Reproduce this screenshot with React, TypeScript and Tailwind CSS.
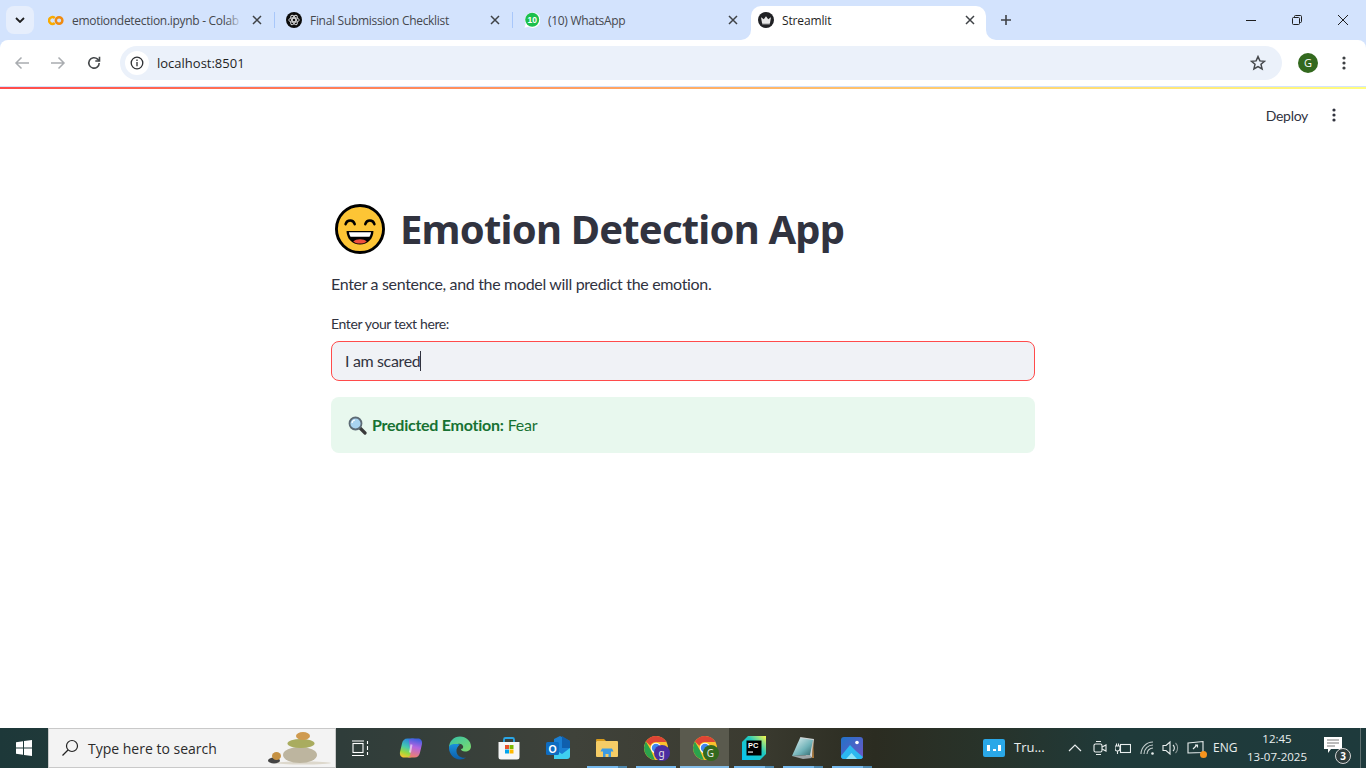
import React from "react";

const ui = { fontFamily: '"Open Sans","Noto Sans",sans-serif' };
const ss = { fontFamily: 'Lato,"Noto Sans",sans-serif' };
const head = { fontFamily: '"Noto Sans","Open Sans",sans-serif' };

function X() {
  return (
    <svg width="10" height="10" viewBox="0 0 10 10">
      <path d="M1 1L9 9M9 1L1 9" stroke="#3f4246" strokeWidth="1.5" fill="none" />
    </svg>
  );
}

function Tab({ icon, title, fade, sep }: { icon: React.ReactNode; title: string; fade?: boolean; sep?: boolean }) {
  return (
    <div className="w-[238px] h-[40px] shrink-0 flex items-center relative pl-[11px]">
      <div className="w-4 h-4 shrink-0 flex items-center justify-center">{icon}</div>
      <div className="ml-2 w-[170px] overflow-hidden whitespace-nowrap text-[12px] tracking-[-0.3px] text-[#45484d] relative pt-px" style={ui}>
        {title}
        {fade && <div className="absolute right-0 top-0 bottom-0 w-4 bg-gradient-to-r from-transparent to-[#d3e3fd]" />}
      </div>
      <div className="ml-[10px] w-[10px] h-[10px] flex"><X /></div>
      {sep && <div className="absolute right-0 top-[12px] h-[16px] w-px bg-[#a8c7fa]" />}
    </div>
  );
}

const Colab = () => (
  <svg width="17" height="11" viewBox="0 0 17 11">
    <path d="M7.200 2.800A3.600 3.600 0 1 0 7.200 8.200" fill="none" stroke="#f9ab00" strokeWidth="2.600" />
    <circle cx="11.800" cy="5.500" r="3.500" fill="none" stroke="#f08a10" strokeWidth="2.600" />
  </svg>
);
const Gpt = () => (
  <svg width="16" height="16" viewBox="0 0 16 16">
    <circle cx="8" cy="8" r="8" fill="#0b0b0b" />
    <g fill="none" stroke="#d8d8d8" strokeWidth="0.9">
      <ellipse cx="8" cy="8" rx="5.200" ry="2.200" />
      <ellipse cx="8" cy="8" rx="5.200" ry="2.200" transform="rotate(60 8 8)" />
      <ellipse cx="8" cy="8" rx="5.200" ry="2.200" transform="rotate(120 8 8)" />
      <circle cx="8" cy="8" r="1.800" />
    </g>
  </svg>
);
const Wa = () => (
  <svg width="16" height="16" viewBox="0 0 16 16">
    <path d="M.5 15.800l1.200-4A7.800 7.800 0 1 1 4.500 14.800z" fill="#fff" />
    <circle cx="8.200" cy="7.800" r="7" fill="#1cc04c" />
    <text x="8.200" y="10.800" textAnchor="middle" fontSize="8.500" fontWeight="700" fill="#fff" fontFamily="Liberation Sans">10</text>
  </svg>
);
const Crown = () => (
  <svg width="16" height="16" viewBox="0 0 16 16">
    <circle cx="8" cy="8" r="8" fill="#202124" />
    <path d="M3 5.200l2.800 2L8 4.200l2.200 3 2.800-2-1 5.800H4z" fill="#e8e8e8" />
    <rect x="4.200" y="11.200" width="7.600" height="1.100" fill="#e8e8e8" />
  </svg>
);

function Kebab({ fill = "#3d4043" }: { fill?: string }) {
  return (
    <svg width="4" height="14" viewBox="0 0 4 14">
      <circle cx="2" cy="2" r="1.600" fill={fill} />
      <circle cx="2" cy="7" r="1.600" fill={fill} />
      <circle cx="2" cy="12" r="1.600" fill={fill} />
    </svg>
  );
}

function TabStrip() {
  return (
    <div className="h-[40px] bg-[#d3e3fd] flex items-center shrink-0 relative">
      <div className="w-[28px] h-[28px] ml-[6px] mr-[3px] rounded-lg bg-[#e6eefc] flex items-center justify-center shrink-0">
        <svg width="10" height="6" viewBox="0 0 10 6"><path d="M1 1l4 4 4-4" stroke="#1f1f1f" strokeWidth="1.800" fill="none" /></svg>
      </div>
      <Tab icon={<Colab />} title="emotiondetection.ipynb - Colab" fade sep />
      <Tab icon={<Gpt />} title="Final Submission Checklist" sep />
      <Tab icon={<Wa />} title="(10) WhatsApp" />
      <div className="w-[235px] h-[34px] mt-[6px] pb-[6px] bg-white rounded-t-[10px] flex items-center pl-[7px] shrink-0 relative">
        <Crown />
        <span className="ml-2 w-[173px] text-[12px] tracking-[-0.15px] text-[#1f1f1f] pt-px" style={ui}>Streamlit</span>
        <span className="ml-[10px] flex"><X /></span>
        <div className="absolute left-[-10px] bottom-0 w-[10px] h-[10px] bg-white">
          <div className="w-full h-full bg-[#d3e3fd] rounded-br-[10px]" />
        </div>
        <div className="absolute right-[-10px] bottom-0 w-[10px] h-[10px] bg-white">
          <div className="w-full h-full bg-[#d3e3fd] rounded-bl-[10px]" />
        </div>
      </div>
      <svg width="12" height="12" viewBox="0 0 12 12" className="ml-[14px]"><path d="M6 1v10M1 6h10" stroke="#3f4246" strokeWidth="1.600" /></svg>
      <div className="ml-auto flex items-center h-full">
        <div className="w-[46px] flex justify-center"><div className="w-[10px] h-px bg-[#1f1f1f]" /></div>
        <div className="w-[46px] flex justify-center">
          <svg width="10" height="10" viewBox="0 0 10 10" fill="none" stroke="#1f1f1f"><rect x=".5" y="2.500" width="7" height="7" rx="1" /><path d="M2.500 2.500V1.500a1 1 0 0 1 1-1h5a1 1 0 0 1 1 1v5a1 1 0 0 1-1 1h-1" /></svg>
        </div>
        <div className="w-[46px] flex justify-center">
          <svg width="10" height="10" viewBox="0 0 10 10"><path d="M0 0L10 10M10 0L0 10" stroke="#1f1f1f" strokeWidth="1" /></svg>
        </div>
      </div>
    </div>
  );
}

function Toolbar() {
  return (
    <div className="h-[47px] bg-[#d3e3fd] shrink-0">
      <div className="h-[46px] bg-white rounded-t-[8px] flex items-center pl-[14px]">
        <svg width="16" height="16" viewBox="0 0 16 16" fill="none" stroke="#a9acb0" strokeWidth="1.500"><path d="M15 8H2M7.500 2.500L2 8l5.500 5.500" /></svg>
        <svg width="16" height="16" viewBox="0 0 16 16" fill="none" stroke="#a9acb0" strokeWidth="1.500" className="ml-[20px]"><path d="M1 8h13M8.500 2.500L14 8l-5.500 5.500" /></svg>
        <svg width="16" height="16" viewBox="0 0 16 16" fill="none" stroke="#44474a" strokeWidth="1.600" className="ml-[20px]"><path d="M13.200 8a5.200 5.200 0 1 1-1.600-3.800L13.400 6" /><path d="M13.500 1.800V6H9.300" /></svg>
        <div className="ml-[18px] w-[1162px] h-[34px] rounded-full bg-[#ebf1fa] flex items-center pl-[5px] pr-[16px]">
          <div className="w-[24px] h-[24px] rounded-full bg-white flex items-center justify-center">
            <svg width="14" height="14" viewBox="0 0 14 14" fill="none" stroke="#2e3033" strokeWidth="1.300"><circle cx="7" cy="7" r="5.800" /><path d="M7 6v4.200M7 3.600v1.400" /></svg>
          </div>
          <span className="ml-[8px] text-[13px] text-[#1f1f1f] pt-px" style={ui}>localhost:8501</span>
          <svg width="16" height="16" viewBox="0 0 16 16" fill="none" stroke="#45484c" strokeWidth="1.500" className="ml-auto"><path d="M8 1.600l1.900 4.300 4.600.4-3.500 3 1.100 4.600L8 11.500l-4.100 2.400L5 9.300l-3.500-3 4.600-.4z" /></svg>
        </div>
        <div className="ml-[16px] w-[20px] h-[20px] rounded-full bg-[#33691e] text-white text-[11px] flex items-center justify-center" style={ui}>G</div>
        <div className="ml-[24px] flex"><Kebab /></div>
      </div>
    </div>
  );
}

function Grin() {
  return (
    <svg width="50" height="50" viewBox="0 0 52 52">
      <circle cx="26" cy="26" r="24.500" fill="#fdc535" stroke="#000" strokeWidth="3" />
      <path d="M11 21c1.500-5 8-5 9.500 0M31.500 21c1.500-5 8-5 9.500 0" fill="none" stroke="#000" strokeWidth="2.600" strokeLinecap="round" />
      <path d="M12 28h28c0 8-6 14-14 14s-14-6-14-14z" fill="#000" />
      <path d="M14.500 29.500h23c-.4 2.400-1 3.600-1.600 4.500H16.100c-.6-.9-1.200-2.100-1.600-4.500z" fill="#fff" />
      <path d="M19 39c3-3 11-3 14 0-2 1.600-4.500 2.200-7 2.200S21 40.600 19 39z" fill="#f0503c" />
    </svg>
  );
}

function Glass() {
  return (
    <svg width="19" height="19" viewBox="0 0 19 19">
      <path d="M11.500 11.500L17 17" stroke="#3a3a3a" strokeWidth="3.200" strokeLinecap="round" />
      <circle cx="7.500" cy="7.500" r="6" fill="#a9d3f0" stroke="#5d6b75" strokeWidth="1.800" />
      <path d="M4 7a3.500 3.500 0 0 1 3-3" stroke="#fff" strokeWidth="1.200" fill="none" />
    </svg>
  );
}

function Page() {
  return (
    <div className="flex-1 bg-white flex flex-col min-h-0" style={ss}>
      <div className="h-[2px] bg-gradient-to-r from-[#ff4b4b] to-[#fffd80] shrink-0" />
      <div className="flex justify-end items-center h-[52px] pr-[30px] shrink-0">
        <span className="text-[14px] tracking-[-0.3px] text-[#31333f]">Deploy</span>
        <span className="ml-[24px] flex"><Kebab fill="#31333f" /></span>
      </div>
      <div className="w-[704px] ml-[331px] pt-[62px] text-[#31333f]">
        <div className="flex items-center h-[52px] pl-[4px]">
          <Grin />
          <h1 className="ml-[15px] text-[40px] font-bold leading-[52px] tracking-[-0.8px] whitespace-nowrap" style={head}>Emotion Detection App</h1>
        </div>
        <p className="mt-[17px] text-[16px] leading-[24px] tracking-[-0.33px]">Enter a sentence, and the model will predict the emotion.</p>
        <div className="mt-[18px] text-[14px] leading-[20px] h-[20px] tracking-[-0.38px]">Enter your text here:</div>
        <div className="mt-[7px] h-[40px] rounded-lg bg-[#f0f2f6] border border-[#ff4b4b] flex items-center pl-[13px] text-[16px] tracking-[-0.35px]">
          <span className="pb-px">I am scared</span>
          <span className="w-px h-[20px] bg-[#31333f]" />
        </div>
        <div className="mt-[16px] h-[56px] rounded-lg bg-[#e8f8ee] flex items-center pl-[17px] text-[16px] text-[#177233] tracking-[-0.25px]">
          <Glass />
          <strong className="ml-[5px] font-bold pb-px">Predicted Emotion:</strong>
          <span className="ml-[4px] pb-px">Fear</span>
        </div>
      </div>
    </div>
  );
}

const Win = () => (
  <svg width="16" height="16" viewBox="0 0 16 16" fill="#fff">
    <path d="M0 2.300L7 1.300V7.500H0zM8 1.100L16 0V7.500H8zM0 8.500H7V14.700L0 13.700zM8 8.500H16V16L8 14.900z" />
  </svg>
);

const Stones = () => (
  <svg width="72" height="36" viewBox="0 0 72 36">
    <ellipse cx="42" cy="33" rx="28" ry="1.500" fill="#ddd8cc" />
    <ellipse cx="39" cy="25" rx="17" ry="8" fill="#bdb59f" />
    <ellipse cx="40" cy="13.500" rx="13.500" ry="4.500" fill="#a9ac5f" />
    <ellipse cx="42" cy="6" rx="7" ry="4" fill="#cf9a4f" />
    <ellipse cx="13" cy="30.500" rx="6" ry="3" fill="#444" />
    <ellipse cx="15.500" cy="26" rx="4.500" ry="4" fill="#c59143" />
  </svg>
);

const TaskView = () => (
  <svg width="17" height="17" viewBox="0 0 17 17" fill="none" stroke="#fff" strokeWidth="1.100">
    <rect x="1" y="3.500" width="10" height="9" />
    <path d="M0 1h12M0 15.500h12M15.500 1v3M15.500 6v4M15.500 12v3" />
  </svg>
);
const Copilot = () => (
  <svg width="24" height="24" viewBox="0 0 24 24">
    <defs>
      <linearGradient id="cpa" x1="0.600" y1="0" x2="0.300" y2="1"><stop offset="0" stopColor="#2a7fe0" /><stop offset=".45" stopColor="#45c8b0" /><stop offset=".75" stopColor="#9ad83e" /><stop offset="1" stopColor="#f7c331" /></linearGradient>
      <linearGradient id="cpb" x1="0.600" y1="0" x2="0.400" y2="1"><stop offset="0" stopColor="#3a5fe0" /><stop offset=".45" stopColor="#b565e0" /><stop offset="1" stopColor="#f0806a" /></linearGradient>
    </defs>
    <path d="M8.500 2.500H16c-2 0-3 1.500-3.500 3.500L14 20c-.5 1.500-3 1.500-5 1.500H5c-3 0-4.500-2.500-4-5.500L3 7.500C3.500 4.500 5.500 2.500 8.500 2.500z" fill="url(#cpa)" />
    <path d="M15.500 21.500H8c2 0 3-1.500 3.500-3.500L10 4c.5-1.500 3-1.500 5-1.500h4c3 0 4.500 2.500 4 5.500L21 16.500c-.5 3-2.500 5-5.500 5z" fill="url(#cpb)" />
    <path d="M12.500 8.500l-1.500 8" stroke="#fff" strokeOpacity=".55" strokeWidth="2" />
  </svg>
);
const Edge = () => (
  <svg width="24" height="24" viewBox="0 0 24 24">
    <defs>
      <linearGradient id="eda" x1="0" y1="0" x2="1" y2="1"><stop offset="0" stopColor="#35c1a8" /><stop offset="1" stopColor="#7fdc6a" /></linearGradient>
      <linearGradient id="edb" x1="0" y1="0" x2="0" y2="1"><stop offset="0" stopColor="#1a8fdc" /><stop offset="1" stopColor="#0c5ea8" /></linearGradient>
    </defs>
    <path d="M1 12C1 5 6 .5 12 .5s11 4.500 11 10c0 3-2.500 5-6 5-2.500 0-4-1-4-2.500 2 0 2.500-1.500 2-3-1-2-3-2.500-5-2C6 8.500 2 9 1 12z" fill="url(#eda)" />
    <path d="M1 12c0 6 5 11.500 11 11.500 2.500 0 4.500-.8 6-2-4 1-9-1-9.500-6-.3-3 1-5 3.500-7C6 7.500 1 8 1 12z" fill="url(#edb)" />
  </svg>
);
const Store = () => (
  <svg width="24" height="24" viewBox="0 0 24 24">
    <path d="M7 6V3.500A1.500 1.500 0 0 1 8.500 2h7A1.500 1.500 0 0 1 17 3.500V6" fill="none" stroke="#2aa6e6" strokeWidth="1.800" />
    <path d="M1.500 6h21v15a2.500 2.500 0 0 1-2.500 2.500H4A2.500 2.500 0 0 1 1.500 21z" fill="#f6f6f6" />
    <rect x="8" y="9" width="4" height="4" fill="#e8502a" />
    <rect x="12.500" y="9" width="4" height="4" fill="#7eb900" />
    <rect x="8" y="13.500" width="4" height="4" fill="#00a4ef" />
    <rect x="12.500" y="13.500" width="4" height="4" fill="#ffb900" />
  </svg>
);
const Outlook = () => (
  <svg width="24" height="24" viewBox="0 0 24 24">
    <path d="M8 3l6-3 10 5v14a3 3 0 0 1-3 3H8z" fill="#1a7fd4" />
    <path d="M16 0l8 5v7h-8z" fill="#0f5fae" />
    <path d="M8 13l8 5 8-6v8a3 3 0 0 1-3 3H8z" fill="#3fd0f0" />
    <rect x="0" y="6" width="13" height="13" rx="1.500" fill="#0f6cc0" />
    <text x="6.500" y="16.500" textAnchor="middle" fontSize="10.500" fontWeight="700" fill="#fff" fontFamily="Liberation Sans">O</text>
  </svg>
);
const Folder = () => (
  <svg width="22" height="20" viewBox="0 0 22 20">
    <path d="M0 2a1 1 0 0 1 1-1h7l2 2h-10z" fill="#d69a1c" />
    <rect x="0" y="3" width="22" height="16" rx="1" fill="#f5cc66" />
    <path d="M6 10.500h10l1.500 3H15V19h-2.500v-3h-3v3H7v-5.500H4.500z" fill="#3d9be2" />
  </svg>
);
function Chrome({ badge, bg }: { badge: string; bg: string }) {
  return (
    <div className="relative w-[24px] h-[24px]">
      <svg width="24" height="24" viewBox="0 0 24 24">
        <circle cx="12" cy="12" r="12" fill="#fbc02d" />
        <path d="M12 0a12 12 0 0 1 10.400 6H12a6 6 0 0 0-5.600 3.700L1.900 5.600A12 12 0 0 1 12 0z" fill="#de4435" />
        <path d="M1.900 5.600l5 8.600 4 9.700A12 12 0 0 1 1.900 5.600z" fill="#2ba24c" />
        <circle cx="12" cy="12" r="5.300" fill="#fff" />
        <circle cx="12" cy="12" r="4.200" fill="#3f86ef" />
      </svg>
      <div className="absolute right-[-2px] bottom-[-1px] w-[16px] h-[16px] rounded-full flex items-center justify-center text-[10px] text-[#e6e6e6]" style={{ background: bg, fontFamily: "Noto Sans" }}>{badge}</div>
    </div>
  );
}
const PyCharm = () => (
  <svg width="24" height="24" viewBox="0 0 24 24">
    <defs>
      <linearGradient id="pca" x1="0" y1="1" x2="1" y2="0"><stop offset="0" stopColor="#07c3f2" /><stop offset=".6" stopColor="#1fc8c0" /><stop offset="1" stopColor="#fcf84a" /></linearGradient>
    </defs>
    <path d="M6 0h18v18l-6 6H0V6z" fill="url(#pca)" />
    <rect x="4.500" y="4.500" width="15" height="15" fill="#000" />
    <text x="6" y="12" fontSize="7.500" fontWeight="700" fill="#fff" fontFamily="Liberation Sans">PC</text>
    <rect x="6" y="15.500" width="5" height="1.100" fill="#fff" />
  </svg>
);
const Notepad = () => (
  <svg width="24" height="24" viewBox="0 0 24 24">
    <defs>
      <linearGradient id="npa" x1="0" y1="0" x2="1" y2="1"><stop offset="0" stopColor="#e8f4f4" /><stop offset=".6" stopColor="#6fb2b8" /><stop offset="1" stopColor="#2e6468" /></linearGradient>
    </defs>
    <path d="M9 1l14 2-2 18-6-1z" fill="#d0d4d6" />
    <path d="M9 2l13 2-3 15-18 1z" fill="url(#npa)" />
    <path d="M1 20l18-1 2 3-9 1z" fill="#9ea6a8" />
    <path d="M22 4l1 18-2 0z" fill="#b07c3c" />
  </svg>
);
const Photos = () => (
  <svg width="22" height="22" viewBox="0 0 22 22">
    <defs>
      <linearGradient id="pha" x1="0" y1="0" x2="1" y2="1"><stop offset="0" stopColor="#2173c9" /><stop offset="1" stopColor="#6f55c5" /></linearGradient>
    </defs>
    <rect width="22" height="22" rx="3" fill="url(#pha)" />
    <circle cx="16" cy="5.500" r="1.800" fill="#fff" />
    <path d="M0 19L9 8l6 6 7 6v0a3 3 0 0 1-3 2H3a3 3 0 0 1-3-3z" fill="#2bb8f0" />
    <path d="M5 22l5.500-6 5.500 6z" fill="#8be4f8" />
  </svg>
);

function TaskIcon({ children, ul, active, dark = true }: { children?: React.ReactNode; ul?: boolean; active?: boolean; dark?: boolean }) {
  return (
    <div className={`w-[49px] h-full shrink-0 flex items-center justify-center relative ${active ? "bg-[#5a5a4e]" : ""}`}>
      {children}
      {ul && (
        <div className={`absolute bottom-0 h-[2px] flex ${active ? "w-[49px]" : "w-[40px]"}`}>
          <div className={`flex-1 ${active ? "bg-[#84bde8]" : "bg-[#76b9ed]"}`} />
          {dark && !active && <div className="w-[9px] bg-[#4e88ae]" />}
        </div>
      )}
    </div>
  );
}

function Taskbar() {
  const c = "#e9eeee";
  return (
    <div className="h-[40px] shrink-0 flex items-center relative" style={{ backgroundImage: "linear-gradient(90deg,#1d3839 0%,#2f3d3a 25%,#3f423a 42%,#3b3b30 55%,#2b2c21 64%,#28332a 72%,#1f3a3a 82%,#1e3a3c 100%)" }}>
      <div className="w-[48px] h-full flex items-center justify-center shrink-0"><Win /></div>
      <div className="w-[288px] h-full shrink-0 bg-[#f3f3f3] border border-[#c9c9c9] flex items-center pl-[12px] overflow-hidden">
        <svg width="18" height="18" viewBox="0 0 18 18" fill="none" stroke="#222" strokeWidth="1.200"><circle cx="11" cy="7" r="5.500" /><path d="M7 11l-5.500 5.500" /></svg>
        <span className="ml-[9px] text-[14px] text-[#2b2b2b]" style={ui}>Type here to search</span>
        <div className="ml-auto flex mr-[2px]"><Stones /></div>
      </div>
      <TaskIcon><TaskView /></TaskIcon>
      <div className="w-[1px] shrink-0" />
      <TaskIcon><Copilot /></TaskIcon>
      <TaskIcon><Edge /></TaskIcon>
      <TaskIcon><Store /></TaskIcon>
      <TaskIcon><Outlook /></TaskIcon>
      <TaskIcon ul><Folder /></TaskIcon>
      <TaskIcon ul dark={false}><Chrome badge="g" bg="#4a2ea0" /></TaskIcon>
      <TaskIcon ul active><Chrome badge="G" bg="#33691e" /></TaskIcon>
      <TaskIcon ul><PyCharm /></TaskIcon>
      <TaskIcon ul><Notepad /></TaskIcon>
      <TaskIcon ul><Photos /></TaskIcon>
      <div className="ml-[107px] flex items-center h-full text-[#e9eeee] shrink-0" style={ui}>
        <svg width="22" height="18" viewBox="0 0 22 18"><rect width="22" height="18" rx="2" fill="#2aa8e8" /><rect x="4" y="6" width="3" height="6" fill="#fff" /><rect x="10" y="10" width="3" height="2" fill="#fff" /><rect x="15" y="6" width="3" height="6" fill="#fff" /></svg>
        <span className="ml-[9px] text-[13px] w-[40px] whitespace-nowrap">Tru...</span>
        <svg width="14" height="8" viewBox="0 0 14 8" fill="none" stroke={c} strokeWidth="1.200" className="ml-[14px]"><path d="M1 7l6-6 6 6" /></svg>
        <svg width="16" height="16" viewBox="0 0 16 16" fill="none" stroke={c} strokeWidth="1.100" className="ml-[10px]"><rect x="2" y="4" width="8" height="8" rx="1.500" /><path d="M10 7l4-2v6l-4-2M4 1.500h5M4 14.500h5" /></svg>
        <svg width="16" height="14" viewBox="0 0 16 14" fill="none" stroke={c} strokeWidth="1.100" className="ml-[7px]"><rect x="5.500" y="3.500" width="10" height="8" /><path d="M0 5h5v2.500a2.500 2.500 0 0 1-5 0zM1.500 5V2.500M3.500 5V2.500M2.500 10v3" /></svg>
        <svg width="16" height="14" viewBox="0 0 16 14" fill="none" stroke="#c3cccc" strokeWidth="1.100" className="ml-[9px]"><path d="M1 13A12 12 0 0 1 13 1M4 13a9 9 0 0 1 9-9M7 13a6 6 0 0 1 6-6" /><circle cx="12.500" cy="12.500" r="1.300" fill={c} stroke="none" /></svg>
        <svg width="18" height="16" viewBox="0 0 18 16" fill="none" stroke={c} strokeWidth="1.100" className="ml-[6px]"><path d="M1 5.500h3L8 2v12l-4-3.500H1z" /><path d="M11 5a4 4 0 0 1 0 6" /><path d="M13.500 3a7 7 0 0 1 0 10" stroke="#8f9a9a" /></svg>
        <div className="relative ml-[7px] w-[18px] h-[16px] flex">
          <svg width="18" height="16" viewBox="0 0 18 16" fill="none" stroke={c} strokeWidth="1.100"><path d="M1 3l15-1.500v11L1 13z" /><path d="M6 9l4-4M8 5h2.500v2.500" /></svg>
          <span className="absolute right-[-2px] bottom-[-2px] w-[7px] h-[7px] rounded-full bg-[#f7941d]" />
        </div>
        <span className="ml-[8px] text-[12px] w-[26px]">ENG</span>
        <div className="ml-[8px] w-[60px] flex flex-col items-center text-[11.500px] leading-[18px] whitespace-nowrap">
          <span>12:45</span>
          <span>13-07-2025</span>
        </div>
        <div className="relative ml-[17px] w-[24px] h-[24px] flex items-start">
          <svg width="18" height="17" viewBox="0 0 18 17" className="mt-[1px]"><path d="M0 0h18v12H7l-3 4v-4H0z" fill="#fff" /><path d="M3 3h12M3 6h12M3 9h8" stroke="#555" strokeWidth=".8" /></svg>
          <span className="absolute right-[-3px] bottom-[-4px] w-[16px] h-[16px] rounded-full border border-[#d5d5d5] bg-[#2e3c3c] text-white text-[10px] font-bold flex items-center justify-center">3</span>
        </div>
      </div>
      <div className="absolute right-[5px] top-0 bottom-0 w-px bg-[#5f7070]" />
    </div>
  );
}

export default function App() {
  return (
    <div className="w-[1366px] h-[768px] flex flex-col overflow-hidden bg-white">
      <TabStrip />
      <Toolbar />
      <Page />
      <Taskbar />
    </div>
  );
}
